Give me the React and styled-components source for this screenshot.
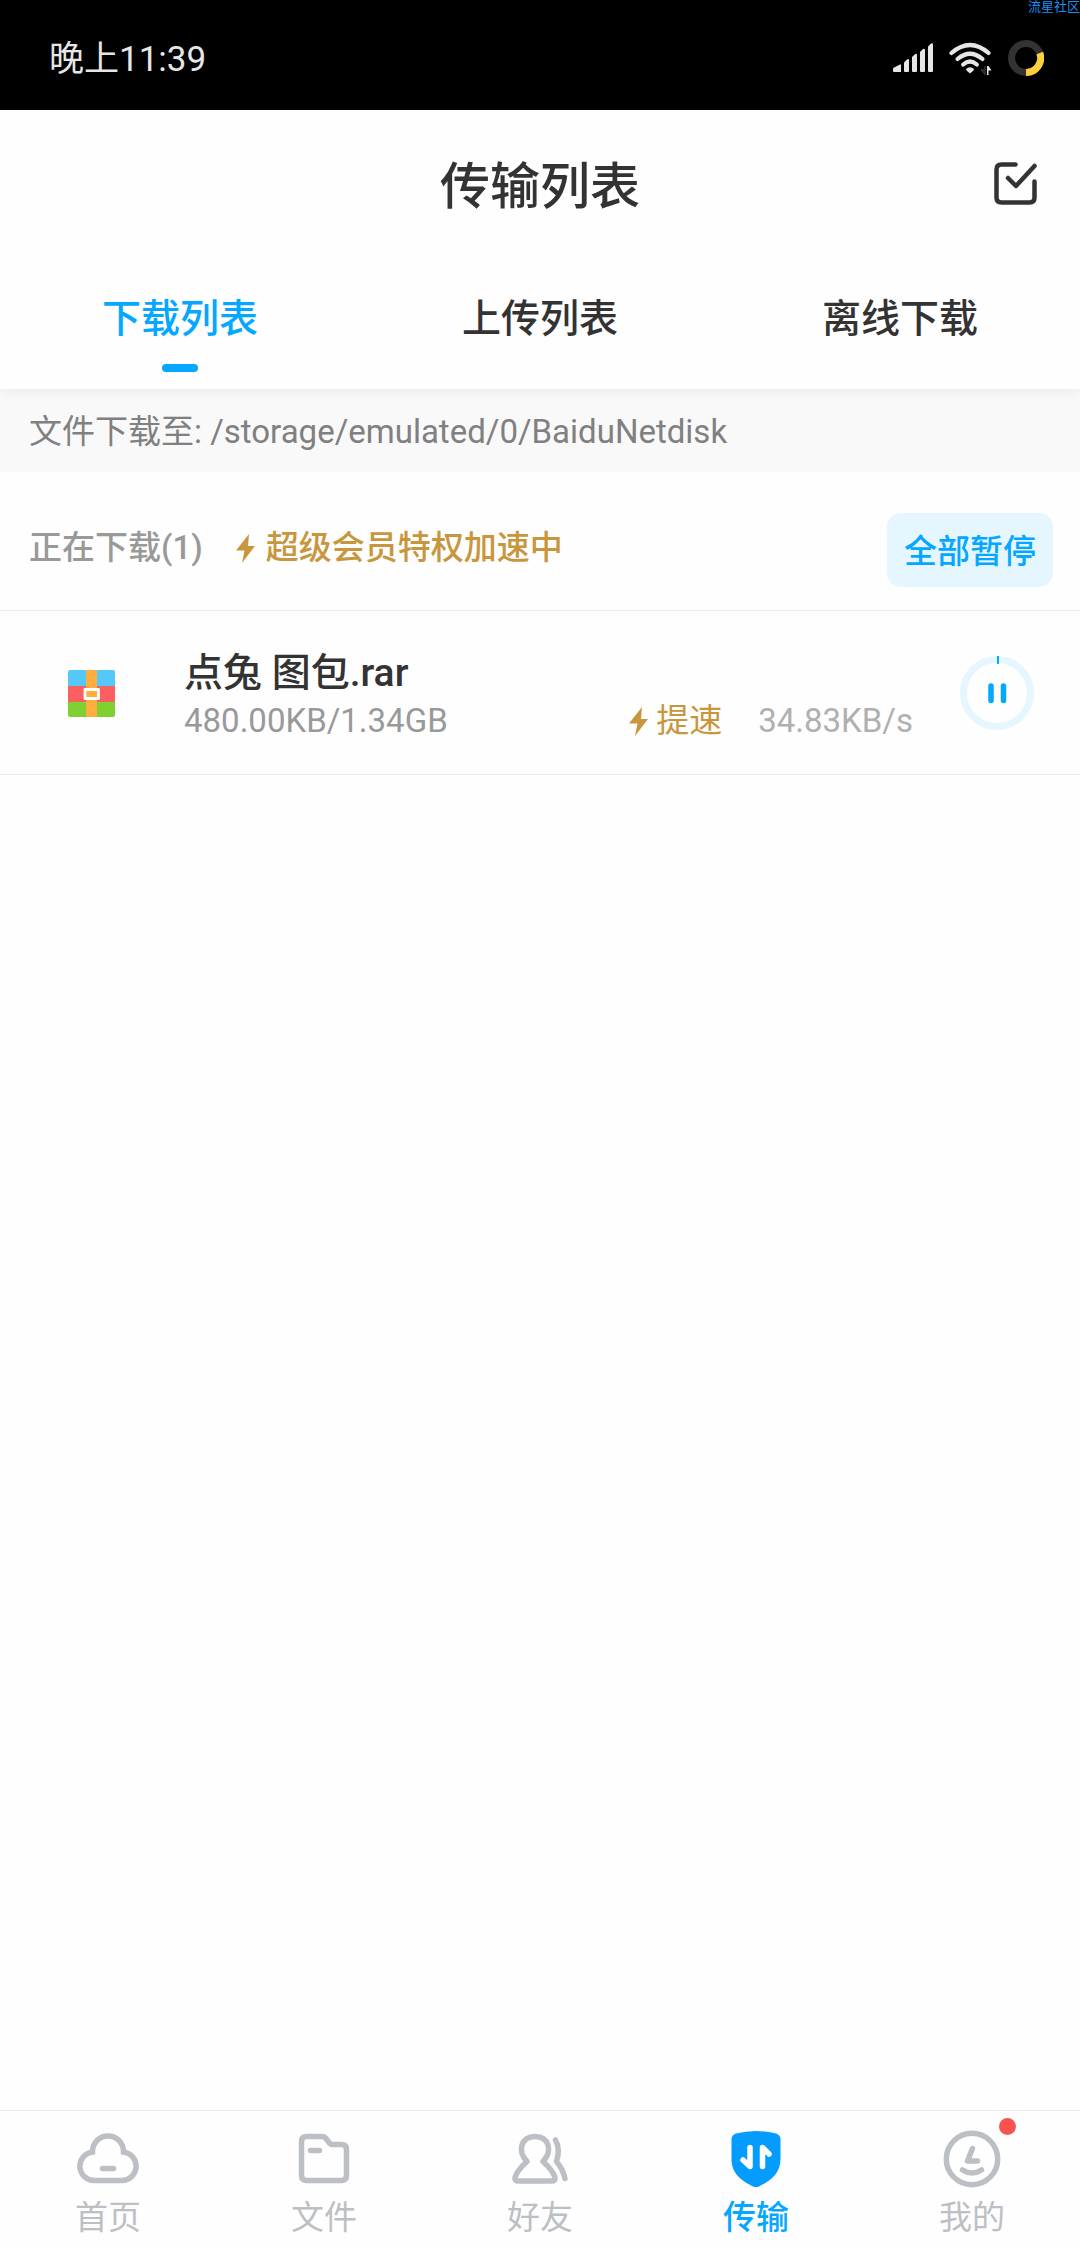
import React from "react";
import styled, { createGlobalStyle } from "styled-components";

const GlobalStyle = createGlobalStyle`
  * {
    box-sizing: border-box;
  }
  body {
    margin: 0;
    background: #fefefe;
    color: #333333;
    font-family: Roboto, "Noto Sans CJK SC", sans-serif;
    font-size: 33px;
    line-height: 40px;
  }
  button {
    padding: 0;
    border: 0;
    background: none;
    color: inherit;
    font: inherit;
    cursor: pointer;
  }
  svg {
    display: block;
    flex-shrink: 0;
  }
`;

const tabs = ["下载列表", "上传列表", "离线下载"];

const navItems = [
  { label: "首页", icon: HomeIcon },
  { label: "文件", icon: FolderIcon },
  { label: "好友", icon: FriendsIcon },
  { label: "传输", icon: TransferIcon, active: true },
  { label: "我的", icon: MineIcon, dot: true },
];

function SignalIcon() {
  return (
    <svg width="40" height="30" viewBox="0 0 40 30" fill="#e6e6e6">
      <path d="M0 29V26Q0 25 1 24.500L7 21.500Q8 21.200 8 22V29H1Q0 29 0 28Z" />
      <path d="M11 28V19.500L14 16.500Q16 15.500 16 17V28Q16 29 15 29H12Q11 29 11 28Z" />
      <path d="M19 28V14L22 11.200Q24 10.200 24 12V28Q24 29 23 29H20Q19 29 19 28Z" />
      <path d="M27 28V9L30 6Q32 5 32 7V28Q32 29 31 29H28Q27 29 27 28Z" />
      <path d="M35 28V3.500L38 0.600Q40 -0.300 40 1.500V28Q40 29 39 29H36Q35 29 35 28Z" />
    </svg>
  );
}

function WifiIcon() {
  return (
    <svg width="43" height="34" viewBox="0 0 43 34" fill="none">
      <g stroke="#e6e6e6" strokeWidth="4.200" strokeLinecap="round">
        <path d="M2.500 12Q21 -4 39.500 12" />
        <path d="M8.500 18Q21 7.500 33.500 18" />
        <path d="M14.200 23.500Q21 17.500 27.800 23.500" />
      </g>
      <path d="M17 28Q21 24.500 25 28Q25 29.500 21 32.500Q17 29.500 17 28Z" fill="#e6e6e6" />
      <path d="M36 25V34M36 33L32.500 29H36Z" stroke="#333" strokeWidth="1.500" />
      <path d="M38 25H39.500L42.500 29.500H39.500V34H38Z" fill="#e6e6e6" />
    </svg>
  );
}

function LoadIcon() {
  return (
    <svg width="36" height="36" viewBox="0 0 36 36" fill="none" strokeWidth="7">
      <circle cx="18" cy="18" r="14.500" stroke="#333" />
      <path d="M31.800 13A14.500 14.500 0 0 1 18 32.500" stroke="#fbcf3d" />
    </svg>
  );
}

function SelectIcon() {
  return (
    <svg width="44" height="44" viewBox="0 0 44 44" fill="none" stroke="#333" strokeWidth="4.500" strokeLinecap="round" strokeLinejoin="round">
      <path d="M21.500 2.500H7.500Q2.500 2.500 2.500 7.500V35.500Q2.500 40.500 7.500 40.500H35.500Q40.500 40.500 40.500 35.500V19.500" />
      <path d="M14 16L22 24L40.500 4" />
    </svg>
  );
}

function BoltIcon() {
  return (
    <svg width="19" height="29" viewBox="0 0 19 29" fill="#c8963c">
      <path d="M13 0L0 16.500H8.500L6 29L19 12H12Z" />
    </svg>
  );
}

function RarIcon() {
  return (
    <svg width="47" height="47" viewBox="0 0 47 47">
      <path d="M0 16V2Q0 0 2 0H45Q47 0 47 2V16Z" fill="#55c8fa" />
      <path d="M0 16H47V32H0Z" fill="#fb6060" />
      <path d="M0 32H47V45Q47 47 45 47H2Q0 47 0 45Z" fill="#80d034" />
      <path d="M18 0H29V47H18Z" fill="#ffae3d" />
      <path d="M17 19.500H30.500V28.500H17Z" fill="#ffae3d" stroke="#fff" strokeWidth="2.800" strokeLinejoin="round" />
    </svg>
  );
}

function PauseIcon() {
  return (
    <svg width="74" height="74" viewBox="0 0 74 74" fill="none">
      <circle cx="37" cy="37" r="33.500" stroke="#e5f6ff" strokeWidth="7" />
      <path d="M38 0V8" stroke="#06a7ff" strokeWidth="2" />
      <path d="M31 30V44.500M43.500 30V44.500" stroke="#06a7ff" strokeWidth="5.500" strokeLinecap="round" />
    </svg>
  );
}

function HomeIcon() {
  return (
    <svg width="62" height="58" viewBox="0 0 62 58" fill="none" stroke="#bcc0c5" strokeWidth="5.500" strokeLinecap="round">
      <path d="M15.500 22V21.500A15.500 15.500 0 0 1 46.500 21.500V22A14.300 14.300 0 0 1 45 50.500H17A14.300 14.300 0 0 1 15.500 22Z" />
      <path d="M25.500 38.500H36.500" />
    </svg>
  );
}

function FolderIcon() {
  return (
    <svg width="52" height="58" viewBox="0 0 52 58" fill="none" stroke="#bcc0c5" strokeWidth="5.500" strokeLinecap="round" strokeLinejoin="round">
      <path d="M8.500 6.500H24Q26.500 6.500 28 8.500L31 12.500Q32.500 14.500 35 14.500H43.500Q48.500 14.500 48.500 19.500V45.500Q48.500 50.500 43.500 50.500H8.500Q3.500 50.500 3.500 45.500V11.500Q3.500 6.500 8.500 6.500Z" />
      <path d="M12.500 20.500H21.500" />
    </svg>
  );
}

function FriendsIcon() {
  return (
    <svg width="58" height="58" viewBox="0 0 58 58" fill="none" stroke="#bcc0c5" strokeWidth="5.500" strokeLinecap="round" strokeLinejoin="round">
      <path d="M16 31.500C6 21 10 6.500 24 6.500S42 21 32 31.500C38 37 42.500 42 44 47.500Q44.500 51 41 51H7Q3.500 51 4 47.500C5.500 42 10 37 16 31.500Z" />
      <path d="M44.500 10C48 16.500 48 24 45.500 31.500C50 37 52.500 41 54 48.500" />
    </svg>
  );
}

function TransferIcon() {
  return (
    <svg width="50" height="58" viewBox="0 0 50 58" fill="none">
      <path d="M5 3.500Q25 -1.500 45 3.500Q49.500 5 49.500 9V29C49.500 44 39 51 28 56.500Q25 58 22 56.500C11 51 0.500 44 0.500 29V9Q0.500 5 5 3.500Z" fill="#049cff" />
      <path d="M19 17.500V36.500L12 30M31.500 36.500V17.500L38 24" stroke="#fff" strokeWidth="5.500" strokeLinecap="round" strokeLinejoin="round" />
    </svg>
  );
}

function MineIcon() {
  return (
    <svg width="58" height="58" viewBox="0 0 58 58" fill="none" stroke="#bcc0c5" strokeWidth="5.500" strokeLinecap="round" strokeLinejoin="round">
      <circle cx="29" cy="29" r="25.700" />
      <path d="M29.500 18.500L24.500 31H34.500" />
      <path d="M19.500 40Q29 46 38.500 40" />
    </svg>
  );
}

function App() {
  return (
    <Page>
      <GlobalStyle />
      <StatusBar>
        <Clock>晚上11:39</Clock>
        <StatusIcons>
          <SignalIcon />
          <WifiIcon />
          <LoadIcon />
        </StatusIcons>
        <Community>流星社区</Community>
      </StatusBar>
      <Header>
        <TitleBar>
          <Title>传输列表</Title>
          <button aria-label="选择">
            <SelectIcon />
          </button>
        </TitleBar>
        <Tabs role="tablist">
          {tabs.map((tab, i) => (
            <Tab key={tab} role="tab" aria-selected={i === 0} $active={i === 0}>
              {tab}
            </Tab>
          ))}
        </Tabs>
      </Header>
      <Main>
        <SavePath>文件下载至: /storage/emulated/0/BaiduNetdisk</SavePath>
        <SectionHead>
          <SectionTitle>正在下载(1)</SectionTitle>
          <VipNote>
            <BoltIcon />
            超级会员特权加速中
          </VipNote>
          <PauseAll>全部暂停</PauseAll>
        </SectionHead>
        <FileRow>
          <RarIcon />
          <FileInfo>
            <FileName>点兔 图包.rar</FileName>
            <FileMeta>
              <span>480.00KB/1.34GB</span>
              <SpeedUp>
                <BoltIcon />
                提速
              </SpeedUp>
              <Speed>34.83KB/s</Speed>
            </FileMeta>
          </FileInfo>
          <button aria-label="暂停">
            <PauseIcon />
          </button>
        </FileRow>
      </Main>
      <BottomNav>
        {navItems.map(({ label, icon: Icon, active, dot }) => (
          <NavItem key={label} $active={active}>
            <NavIcon>
              <Icon />
              {dot && <Dot />}
            </NavIcon>
            {label}
          </NavItem>
        ))}
      </BottomNav>
    </Page>
  );
}

const Page = styled.div`
  display: flex;
  flex-direction: column;
  min-height: 100vh;
`;

const StatusBar = styled.div`
  position: relative;
  display: flex;
  align-items: center;
  justify-content: space-between;
  padding: 35px 36px 29px 49px;
  background: #000;
  color: #e6e6e6;
`;

const Clock = styled.time`
  padding-top: 4px;
  font-size: 35px;
  line-height: 42px;
`;

const StatusIcons = styled.div`
  display: flex;
  align-items: center;
  gap: 16px;
`;

const Community = styled.span`
  position: absolute;
  top: 0;
  right: 0;
  color: #1f8fef;
  font-size: 13px;
  line-height: 13px;
`;

const Header = styled.header`
  position: relative;
  background: #fefefe;
  box-shadow: 0 2px 14px rgba(0, 0, 0, 0.07);
`;

const TitleBar = styled.div`
  display: grid;
  grid-template-columns: 1fr auto 1fr;
  align-items: center;
  padding: 41px 42px 0;

  button {
    grid-column: 3;
    justify-self: end;
  }
`;

const Title = styled.h1`
  grid-column: 2;
  margin: 0;
  padding-top: 6px;
  font-size: 50px;
  font-weight: 500;
  line-height: 60px;
`;

const Tabs = styled.div`
  display: grid;
  grid-template-columns: repeat(3, 1fr);
`;

const Tab = styled.button`
  display: flex;
  flex-direction: column;
  align-items: center;
  gap: 20px;
  padding: 77px 0 17px;
  color: ${(props) => (props.$active ? "#06a7ff" : "#333333")};
  font-size: 39px;
  font-weight: 500;
  line-height: 50px;

  &::after {
    content: "";
    width: 36px;
    height: 8px;
    border-radius: 4px;
    background: ${(props) => (props.$active ? "#06a7ff" : "transparent")};
  }
`;

const Main = styled.main`
  flex: 1;
`;

const SavePath = styled.p`
  margin: 0;
  padding: 23px 29px 20px;
  background: #f9f9f9;
  color: #808080;
`;

const SectionHead = styled.div`
  display: flex;
  align-items: center;
  padding: 41px 27px 23px 29px;
  border-bottom: 1px solid #ececec;
  font-weight: 500;
`;

const SectionTitle = styled.h2`
  margin: 0;
  padding-bottom: 4px;
  color: #999999;
  font-size: 33px;
  font-weight: 500;
`;

const VipNote = styled.span`
  display: flex;
  align-items: center;
  gap: 11px;
  margin-left: 33px;
  padding-bottom: 4px;
  color: #c8963c;
`;

const PauseAll = styled.button`
  margin-left: auto;
  padding: 19px 17px 15px;
  border-radius: 14px;
  background: #e5f6ff;
  color: #06a7ff;
`;

const FileRow = styled.div`
  display: flex;
  align-items: center;
  padding: 34px 46px 33px 68px;
  border-bottom: 1px solid #ececec;
`;

const FileInfo = styled.div`
  flex: 1;
  margin: 0 47px 0 69px;
  padding-top: 3px;
`;

const FileName = styled.div`
  font-size: 39px;
  font-weight: 500;
  line-height: 50px;
`;

const FileMeta = styled.div`
  display: flex;
  align-items: center;
  margin-top: 3px;
  color: #999999;
`;

const SpeedUp = styled.button`
  display: flex;
  align-items: center;
  gap: 8px;
  margin-left: auto;
  color: #c8963c;
`;

const Speed = styled.span`
  margin-left: 36px;
  color: #b0b0b0;
`;

const BottomNav = styled.nav`
  display: grid;
  grid-template-columns: repeat(5, 1fr);
  border-top: 1px solid #ececec;
`;

const NavItem = styled.button`
  display: flex;
  flex-direction: column;
  align-items: center;
  gap: 10px;
  padding: 19px 0 10px;
  color: ${(props) => (props.$active ? "#06a7ff" : "#bcc0c5")};
  font-weight: ${(props) => (props.$active ? 500 : 400)};
`;

const NavIcon = styled.span`
  position: relative;
`;

const Dot = styled.span`
  position: absolute;
  top: -12px;
  right: -15px;
  width: 17px;
  height: 17px;
  border-radius: 50%;
  background: #f95350;
`;

export default App;
